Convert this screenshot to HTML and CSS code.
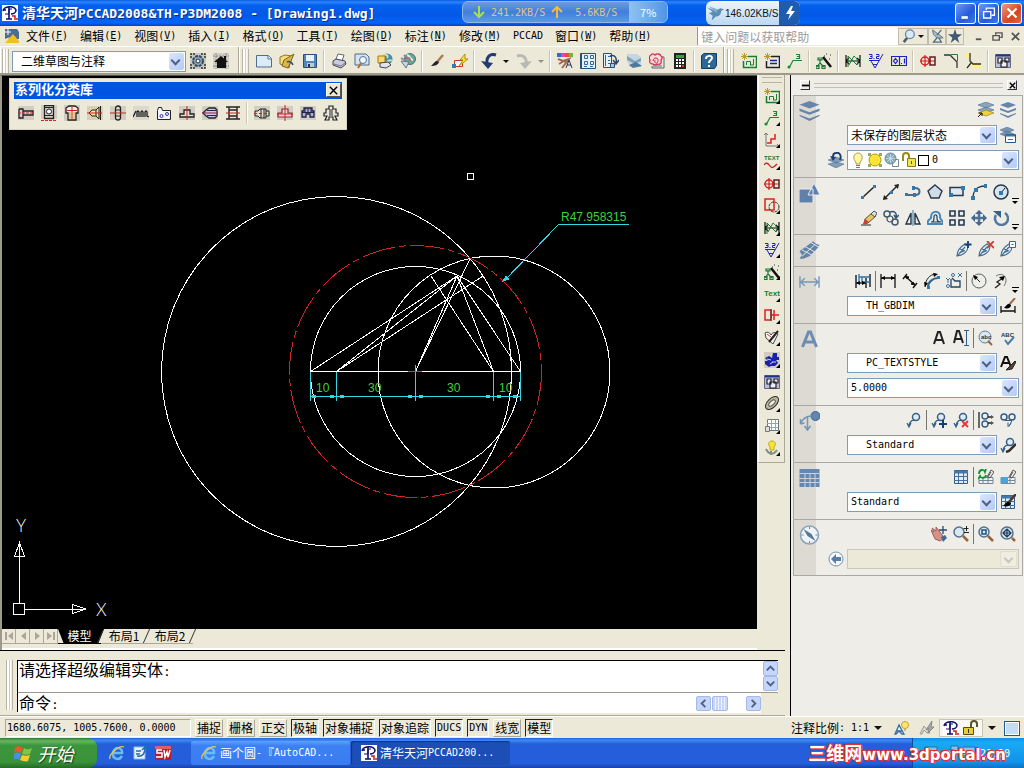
FILE: index.html
```html
<!DOCTYPE html>
<html lang="zh-CN">
<head>
    <meta charset="UTF-8">
    <meta name="viewport" content="width=device-width, initial-scale=1.0">
    <title>清华天河PCCAD2008&amp;TH-P3DM2008 - [Drawing1.dwg]</title>
    <link rel="stylesheet" href="styles.css">
</head>
<body>
    <!-- Icon sprite -->
    <svg class="sprite" aria-hidden="true">
        <symbol id="app" viewBox="0 0 16 16"><path fill="#fff" d="M0 0h16v16H0z"/><path d="M1 6c1-5 11-6 13-1 0 3-3 4-5 4M1 5h3M7 2v12M4 14h6" fill="none" stroke="#101070" stroke-width="1.6"/><path d="M3 9h4V4h3" fill="none" stroke="#101070"/><path d="M10 11h3v2M12 14h4" fill="none" stroke="#d02020" stroke-width="1.6"/></symbol>
        <symbol id="dwg" viewBox="0 0 16 16"><path fill="#4b6d94" d="M1 1h12l2 3v7H1z"/><path fill="#f0c020" d="M1 15 9 6l6 7v2z"/><path fill="#ffe680" d="m1 11 5-2-5 6z"/><path stroke="#fff" d="M4 1v6M1 4h6"/></symbol>
        <symbol id="gear" viewBox="0 0 16 16"><path d="M0 0h16v16H0z" fill="#c6c8c2"/><path d="M1 5V1h4M11 1h4v4M15 11v4h-4M5 15H1v-4" fill="none" stroke="#333" stroke-width="1.500" stroke-dasharray="2 1"/><circle cx="8" cy="8" r="5" fill="#90a5b5" stroke="#334b60" stroke-width="2" stroke-dasharray="3 1"/><circle cx="8" cy="8" r="2" fill="#f4f4ee" stroke="#234"/></symbol>
        <symbol id="home" viewBox="0 0 16 16"><path d="M0 0h16v16H0z" fill="#d2d0c6"/><path d="M0 3h16M3 0v16M13 0v16M0 13h16" fill="none" stroke="#888" stroke-dasharray="2 1"/><path d="m1 9 7-6 7 6h-2v6H4V9z" fill="#111"/><path fill="#111" d="M11 3h2v4h-2z"/></symbol>
        <symbol id="new" viewBox="0 0 16 16"><path d="M.5 2.500h12l3 3v8.500H.5z" fill="#dcebf8" stroke="#4f6f91"/><path d="M12 2v4h3" fill="#fff" stroke="#4f6f91"/></symbol>
        <symbol id="open" viewBox="0 0 16 16"><path d="M1 4 6 2l7 1-3 12-9-4z" fill="#f6dd7a" stroke="#94752c"/><path d="m5 7 10-6-6 14-6-2z" fill="#d9b646" stroke="#7e6428"/><path d="M8 9c2-1 5 0 6 3" fill="none" stroke="#384d66" stroke-width="1.500"/></symbol>
        <symbol id="save" viewBox="0 0 16 16"><path d="M1.500 1.500h13v13h-13z" fill="#5685bd" stroke="#2d4e7b"/><path fill="#e8f2fb" d="M4 2h8v6H4z"/><path fill="#b9c7d6" d="M5 10h7v4H5z"/><path fill="#234" d="M6 11h2v3H6z"/></symbol>
        <symbol id="print" viewBox="0 0 16 16"><path d="m5 6 2-5 6 1-2 6z" fill="#fff" stroke="#667"/><path d="m2 8 3-2 9 2 1 3-5 4-8-3z" fill="#c9cbe0" stroke="#445"/><path d="m3 11 7 2 4-3" fill="none" stroke="#778"/></symbol>
        <symbol id="preview" viewBox="0 0 16 16"><path d="M1 1h11l3 3v8H1z" fill="#d5e5f3" stroke="#50698a"/><circle cx="9" cy="7" r="3.500" fill="#eef8ff" stroke="#54708f"/><path d="m7 10-3 5" stroke="#a57236" stroke-width="2"/></symbol>
        <symbol id="publish" viewBox="0 0 16 16"><circle cx="10" cy="6" r="5.500" fill="#4b87a7"/><path d="M6 3c3-3 6 0 4 2M10 9c2-3 4-1 5-2" stroke="#bfe2bf" stroke-width="2" fill="none"/><path d="M1 3h7v7H1z" fill="#ffd967" stroke="#a67815"/><path d="m3 10 8-1 3 3-5 3-6-1z" fill="#e3e3ec" stroke="#445"/></symbol>
        <symbol id="globe" viewBox="0 0 16 16"><circle cx="10" cy="6" r="5.500" fill="#6ba494" stroke="#4a7187"/><path d="M7 2c4 1 2 4 6 5" stroke="#d5f2e4" stroke-width="2" fill="none"/><path d="m1 5 5 3M4 2l3 3" stroke="#889" stroke-width="2"/><path d="m1 8 8 1-3 6z" fill="#c3d9e9" stroke="#678"/><path d="M5 5h5v3" stroke="#cc4f49" fill="none"/></symbol>
        <symbol id="brush" viewBox="0 0 16 16"><path d="m14 2-6 7" stroke="#a87d52" stroke-width="2.500"/><path d="M8 8c-2 0-3 2-6 5 4 0 7-1 8-4z" fill="#252525"/></symbol>
        <symbol id="block" viewBox="0 0 16 16"><path d="M2.500 7.500h8v6h-8z" fill="#f7f6f0" stroke="#c03a24"/><path d="M0 11h4v4H0z" fill="#3b78b4"/><path d="m8 7 5-6v5h3l-9 7 4-6z" fill="#ffe03b" stroke="#9e7e00" stroke-width=".8"/></symbol>
        <symbol id="undo" viewBox="0 0 16 16"><path d="M15 2C9 0 5 4 6 11" stroke="#233b6e" stroke-width="3" fill="none"/><path d="m0 8 12 2-5 6z" fill="#233b6e"/></symbol>
        <symbol id="redo" viewBox="0 0 16 16"><path d="M1 3c6-2 10 2 9 7" stroke="#b8b8b5" stroke-width="3" fill="none"/><path d="m4 10 12-2-7 8z" fill="#b8b8b5"/></symbol>
        <symbol id="props" viewBox="0 0 16 16"><path fill="#2a6bd0" d="M0 0h4v4H0z"/><path fill="#e34a9b" d="M4 0h4v4H4z"/><path fill="#ea4c36" d="M8 0h4v4H8z"/><path fill="#69b93e" d="M12 0h4v4h-4z"/><path d="m1 6 5 2 6-2-7 9M2 11l5-3 3 2" stroke="#a06b52" stroke-width="2" fill="none"/><path d="m9 15 3-8 3 8m-5-3h4" fill="none" stroke="#335"/></symbol>
        <symbol id="dcenter" viewBox="0 0 16 16"><path fill="#e7f0f8" stroke="#294f79" d="M.5.500h15v15H.5z"/><path stroke="#294f79" stroke-width="2" d="M1 1v14"/><path fill="none" stroke="#2f6b9a" d="M4.500 2.500h3v3h-3zm6 0h3v3h-3zM4.500 8.500h3v3h-3zm6 0h3v3h-3zM4 13.500h3m3 0h3"/></symbol>
        <symbol id="palettes" viewBox="0 0 16 16"><path fill="#e7f0f8" stroke="#294f79" d="M.5.500h8v14h-8z"/><path d="M2.500 2v11M5 3.500h3M5 7.500h2M5 10.500h3" stroke="#2f6b9a"/><path d="M7 3c5-2 7 2 6 7M10 7l3 4 3-4" fill="none" stroke="#2c4568" stroke-width="1.500"/><path fill="#a8c5dd" stroke="#294f79" d="M7.500 10.500h4v4h-4z"/></symbol>
        <symbol id="sheetset" viewBox="0 0 16 16"><path fill="#c4d6e4" d="M1 1h10l4 3v10H4L1 8z"/><path fill="#7fa1b8" d="m1 3 8 5 6-3v3l-6 3-8-4z"/><path fill="#4e7898" d="m3 12 7-3 6 4-9 2z"/></symbol>
        <symbol id="markup" viewBox="0 0 16 16"><path d="M13 4h2v11H3v-2M13 13H4" fill="none" stroke="#567"/><path d="M2 2c1-2 3-1 4 0 2-2 5-1 6 1 2 1 1 3 0 4 1 3-1 5-3 4-2 1-4 1-5 0-3 0-4-2-3-4-1-2-1-4 1-5z" fill="#f7dadd" stroke="#d5304d" stroke-width="1.300"/><path d="M4 8c0-4 6-4 5 0s-4 2-3-1" stroke="#cc263f" fill="none"/></symbol>
        <symbol id="calc" viewBox="0 0 16 16"><path fill="#222" d="M2 0h12v16H2z"/><path fill="#3f9b46" d="M4 2h8v3H4z"/><path d="M4 7h2m1 0h2m1 0h2M4 10h2m1 0h2m1 0h2M4 13h2m1 0h2" stroke="#fff" stroke-width="2"/><path d="M10 13h2" stroke="#e33" stroke-width="2"/></symbol>
        <symbol id="help" viewBox="0 0 16 16"><path fill="#2e6797" stroke="#173c63" d="M.5 2.500 3 .500h12.500v12l-2 3H.5z"/><path d="M5 6c0-4 6-4 6-1 0 2-3 2-3 5M8 12v2" stroke="#fff" stroke-width="2" fill="none"/></symbol>
        <symbol id="detail" viewBox="0 0 16 16"><path d="M7 3.500h8.500v11H2.500V8" fill="none" stroke="#1b7c32" stroke-width="1.500"/><path d="M5.500 12V8.500h4V12m3-6v6H9" fill="none" stroke="#1b7c32"/><path d="m1 1 5 5M3.500 0v7M0 3.500h7M1 6l5-5" stroke="#b8992a"/></symbol>
        <symbol id="title" viewBox="0 0 16 16"><path d="M7 3.500h8.500v11H2.500V8" fill="none" stroke="#222" stroke-width="1.500"/><path d="M6 7.500h7M6 10.500h7" stroke="#1a278a" stroke-width="1.500"/><path d="m1 1 5 5M3.500 0v7M0 3.500h7M1 6l5-5" stroke="#b8992a"/></symbol>
        <symbol id="leader" viewBox="0 0 16 16"><path d="m2 15 4-7.500h9M9 1.500h3.500v4H9m1-2h2" fill="none" stroke="#168837" stroke-width="1.200"/><circle cx="2" cy="14" r="1.500" fill="#168837"/></symbol>
        <symbol id="wand" viewBox="0 0 16 16"><path d="m7 4 8 10" stroke="#111" stroke-width="2.500"/><path d="M4 6v4m-3 4 3-4 4 4M2 5h4v2H2zM0 12.500h3v3H0zm6 0h3v3H6z" fill="none" stroke="#187534" stroke-width="1.200"/><path d="M10 1h1m3 1h1M8 3h1m4 3h1" stroke="#333"/></symbol>
        <symbol id="roughness" viewBox="0 0 16 16"><path d="M1 2v12M15 2v12M1 8h14M4 5 1 8l3 3m8-6 3 3-3 3" stroke="#111" fill="none" stroke-width="1.200"/><path d="M3 14V3l9 9c2-3 0-7-3-9L4 12" fill="none" stroke="#237737"/></symbol>
        <symbol id="surface" viewBox="0 0 16 16"><path d="M1 7.500h10M3 8l4 7 8-14M5 11.500h4M1 1.500h3v4H1m1-2h2M6 5v1M8 1.500h3v2H8.500v2H11" fill="none" stroke="#2323be"/></symbol>
        <symbol id="tol" viewBox="0 0 16 16"><path d="M.5 3.500h15v9H.5zM8.500 4v9M4.500 5.500l2 2.500-2 2.500-2-2.500zM10 10.500h1m2.500-5v5" fill="none" stroke="#2020ba" stroke-width="1.200"/></symbol>
        <symbol id="shaft" viewBox="0 0 16 16"><circle cx="5" cy="8" r="4" fill="none" stroke="#d42020" stroke-width="1.500"/><path d="M0 8h15M5 2v12" stroke="#d42020" stroke-width="1.200"/><path d="M10 4h5v8h-5z" fill="none" stroke="#5b2020" stroke-width="1.500"/></symbol>
        <symbol id="chamfer" viewBox="0 0 16 16"><path d="M1 2h6l7 7v6" fill="none" stroke="#333" stroke-width="1.300"/><path d="M8 1.500h6.500V8" fill="none" stroke="#257b34"/></symbol>
        <symbol id="corner" viewBox="0 0 16 16"><path fill="#fff08a" d="M5 10h11v5H7zM0 0h4v5H0z"/><path d="M4 0v8l3 3h8M1 15l4-5" fill="none" stroke="#332" stroke-width="1.300"/></symbol>
        <symbol id="windows" viewBox="0 0 16 16"><path fill="#b9bfd8" stroke="#668" d="M.5 1.500h15v13H.5z"/><path stroke="#238" stroke-width="2" d="M1 2.500h14"/><path fill="#eef" stroke="#222" stroke-width="1.200" d="M3 5h4v5H3zm3 3h6v6H6zm4-3h4v4h-4z"/></symbol>
        <symbol id="bolt" viewBox="0 0 16 16"><path d="M0 1h16v14H0z" fill="#d2cdc2"/><path d="M1 4h4v9H1V4m4 2h10v4H5" fill="none" stroke="#222" stroke-width="1.300"/><path d="M0 8h16" stroke="#c8243c" stroke-dasharray="3 1"/></symbol>
        <symbol id="bearing" viewBox="0 0 16 16"><path d="M0 0h16v14H0z" fill="#d2cdc2"/><path d="M3.500.500h9v13h-9z" fill="none" stroke="#222" stroke-width="1.300"/><path d="M3 2.500h10M3 10.500h10" stroke="#222"/><circle cx="8" cy="6.500" r="2.500" fill="#fff" stroke="#222"/><path d="M0 15.500h16" stroke="#d22" stroke-dasharray="3 1"/></symbol>
        <symbol id="nut" viewBox="0 0 16 16"><path d="M0 0h16v16H0z" fill="#d2cdc2"/><path d="m2 3 3-2h6l3 2v5h-2v7H4V8H2z" fill="#f7eadf" stroke="#222" stroke-width="1.300"/><path d="M8 0v15M3 5.500h10" stroke="#c22"/><path d="M6 7v7m4-7v7" stroke="#c9a82c"/></symbol>
        <symbol id="rivet" viewBox="0 0 16 16"><path d="M0 1h16v14H0z" fill="#d8cfb4"/><path d="m2 8 3-3h4l3-3v12l-3-3H5z" fill="#f4e2a0" stroke="#222"/><path d="M13.500 1v14M9 5v6" stroke="#222"/><path d="M0 8h15" stroke="#c22"/></symbol>
        <symbol id="key" viewBox="0 0 16 16"><path d="M0 1h16v14H0z" fill="#d2cdc2"/><rect x="5.500" y="1" width="5" height="14" rx="2.500" fill="#e2dcc4" stroke="#222" stroke-width="1.300"/><path d="M5 5h6M5 11h6" stroke="#222"/><path d="M0 8h16" stroke="#c22"/></symbol>
        <symbol id="spring" viewBox="0 0 16 16"><path d="M0 1h16v14H0z" fill="#ddd8cc"/><path d="m0 12 3-6M4 12V7l1-1 1 1v5M8 12V7l1-1 1 1v5M12 12V7l1-1 1 1v4l2 1" fill="none" stroke="#222" stroke-width="1.300"/></symbol>
        <symbol id="plate" viewBox="0 0 16 16"><path d="M1.500 14.500v-9l1-3h3l1 3h8v9z" fill="#f5f4ff" stroke="#222"/><circle cx="5.500" cy="11" r="1.500" fill="none" stroke="#33a"/><circle cx="11" cy="9" r="1.500" fill="none" stroke="#33a"/></symbol>
        <symbol id="flange" viewBox="0 0 16 16"><path d="M0 1h16v14H0z" fill="#d2cdc2"/><path d="M5 5h6v4h4v3H1V9h4z" fill="#e6e0d5" stroke="#222" stroke-width="1.300"/><path d="M8 1v14" stroke="#c22"/></symbol>
        <symbol id="motor" viewBox="0 0 16 16"><path d="M0 1h16v14H0z" fill="#d2cdc2"/><path d="m1 8 3-3 3-2h6l2 2v6l-2 2H7l-3-2z" fill="#cdc8e6" stroke="#222" stroke-width="1.300"/><path d="M5 5.500h9M5 10.500h9" stroke="#225"/><path d="M0 8h16" stroke="#8c2445"/></symbol>
        <symbol id="beam" viewBox="0 0 16 16"><path d="M1 2h14M1 14h14M4 2v12m8-12v12M4 5h8m-8 6h8" fill="none" stroke="#222" stroke-width="1.400"/><path d="M1 8h14" stroke="#c22"/></symbol>
        <symbol id="reducer" viewBox="0 0 16 16"><path d="M0 1h16v14H0z" fill="#d2cdc2"/><path d="M1 6h3l2-2h6v9H6l-2-2H1zm6-2v9m3-9v9m2-7h3v5h-3" fill="#e5dfd3" stroke="#222"/><path d="M0 8.500h16" stroke="#c22" stroke-dasharray="3 2"/></symbol>
        <symbol id="valve" viewBox="0 0 16 16"><path d="M0 1h16v14H0z" fill="#d2cdc2"/><path d="M5 4h6v4h4v4H1V8h4z" fill="#f4d6d6" stroke="#8b2338" stroke-width="1.200"/><path d="M8 0v16M0 9h16" stroke="#c22"/></symbol>
        <symbol id="pump" viewBox="0 0 16 16"><path d="M0 1h16v14H0z" fill="#d2cdc2"/><path d="M4 3h8v3h2v6h-4V9H6v3H2V6h2z" fill="#aab0dc" stroke="#224" stroke-width="1.300"/><path d="M5 3v5m3-5v6m3-6v5M2 7.500h12" stroke="#224"/></symbol>
        <symbol id="fitting" viewBox="0 0 16 16"><path d="M6 1h4v3h3v4h2v3h-3l2 4h-4v-3H6v3H2l2-4H1V8h2V4h3z" fill="#eae8dc" stroke="#222" stroke-width="1.200"/><path d="M7 4v7m2-7v7" stroke="#222"/></symbol>
        <symbol id="axis" viewBox="0 0 16 16"><path d="M2 1v13h13M0 3l2-2 2 2m9 9 2 2-2 2" fill="none" stroke="#777"/><path d="M3 11h4V7h4V2" fill="none" stroke="#d22" stroke-width="1.500"/></symbol>
        <symbol id="textwave" viewBox="0 0 16 16"><path d="M0 11c2-3 4-2 6 1s4 1 7-2" fill="none" stroke="#c22" stroke-width="1.300"/><text x="0" y="6" class="t7">TEXT</text></symbol>
        <symbol id="redbox" viewBox="0 0 16 16"><path d="M1 1h9v11H1z" fill="none" stroke="#d22" stroke-width="1.500"/><circle cx="10" cy="9" r="5" fill="none" stroke="#333" stroke-dasharray="3 1"/></symbol>
        <symbol id="textgreen" viewBox="0 0 16 16"><text x="0" y="10" class="t8">Text</text></symbol>
        <symbol id="redrect" viewBox="0 0 16 16"><path d="M1 2h6v10H1zm6 5h8M10 2v10" fill="none" stroke="#d22" stroke-width="1.500"/><path d="M7 1v12" stroke="#333"/></symbol>
        <symbol id="tag" viewBox="0 0 16 16"><path d="M1 3c3-2 5 0 6 2 2-4 6-2 7-1L9 14 2 8z" fill="#f5f5ed" stroke="#444"/><path d="m5 12 9-11" stroke="#222" stroke-width="2"/><path d="m3 4 4 3" stroke="#c44"/></symbol>
        <symbol id="blueblob" viewBox="0 0 16 16"><path d="M0 0h16v16H0z" fill="#d0cdc0"/><path d="M9 1h4v4h2v3h-3l2 3-3 3H7l-2 1-4-3V9h3L1 6l4-2 3 2z" fill="#1821a8"/><path d="m3 7 4 1m1 2h4M6 12l3-2" stroke="#cfd3f2"/></symbol>
        <symbol id="ring" viewBox="0 0 16 16"><ellipse cx="8" cy="7" rx="8" ry="4.500" transform="rotate(-45 8 7)" fill="#b7b79a" stroke="#333"/><ellipse cx="8" cy="7" rx="4" ry="2" transform="rotate(-45 8 7)" fill="#eeeedc" stroke="#555"/></symbol>
        <symbol id="sheet" viewBox="0 0 16 16"><path d="M3.500 1.500h11v11h-11z" fill="#fff" stroke="#697b7b"/><path d="M3 5.500h11M3 9.500h11M7.500 2v10m4-10v10" stroke="#8baaaa"/><path fill="#ddd" d="M1.500 8.500h4v5h-4z" stroke="#777"/></symbol>
        <symbol id="idea" viewBox="0 0 16 16"><path d="M8 1c4 0 4 4 2 6v3H6V7C4 5 4 1 8 1z" fill="#f4e433" stroke="#c0a820"/><path d="M2 9c3 6 8 6 11 1M7 11v4" fill="none" stroke="#838e85" stroke-width="2"/></symbol>
        <symbol id="layers" viewBox="0 0 16 16"><path d="m8 0 8 3-8 3-8-3zM0 6l8 3 8-3v2l-8 3-8-3zm0 5 8 3 8-3v1l-8 4-8-4z" fill="#6685aa"/></symbol>
        <symbol id="layeriso" viewBox="0 0 16 16"><path d="m8 0 8 3-8 3-8-3zm0 5 8 3-8 3-8-3z" fill="#8aa5bf" stroke="#536d87" stroke-width=".6"/><path d="m8 8 8 3-8 3-8-3z" fill="#f1d238" stroke="#8d7920" stroke-width=".6"/><path d="m0 15 4-4m-3 0h3v3" fill="none" stroke="#111"/></symbol>
        <symbol id="layerstate" viewBox="0 0 16 16"><path d="m7 0 7 3-7 3-7-3zm0 4 7 3-7 3-7-3z" fill="#7894b0" stroke="#49688d" stroke-width=".5"/><path d="M5.500 7.500h10v8h-10z" fill="#fff" stroke="#295783"/><path d="M5 8.500h10" stroke="#3974b1" stroke-width="2"/><path d="M8 12.500h5" stroke="#3974b1"/></symbol>
        <symbol id="layerprev" viewBox="0 0 16 16"><path d="m8 5 8 3-8 3-8-3zm0 5 8 2-8 4-8-4z" fill="#809cb6" stroke="#49688d" stroke-width=".5"/><path d="M12 8c2-5-1-8-4-7-2 0-3 2-3 4" stroke="#203f70" stroke-width="2" fill="none"/><path d="m2 4 6 1-3 4z" fill="#203f70"/></symbol>
        <symbol id="bulb" viewBox="0 0 16 16"><path d="M6 10C2 7 4 1 8 1s6 6 2 9v2H6z" fill="#fff7a6" stroke="#b39b3e"/><path d="M6 13.500h4m-4 2h4" stroke="#777"/></symbol>
        <symbol id="sun" viewBox="0 0 16 16"><path d="M1 1h3v3H1zm11 0h3v3h-3zM1 12h3v3H1zm11 0h3v3h-3z" fill="#8fae5a"/><circle cx="8" cy="8" r="6" fill="#ffe533" stroke="#b49318"/></symbol>
        <symbol id="freeze" viewBox="0 0 16 16"><path d="M8.500 7.500h6v7h-6z" fill="#fff" stroke="#789"/><circle cx="6.500" cy="6.500" r="5.500" fill="#88aab7" stroke="#6d8b98"/><path d="M2 6.500h9M6.500 2v9M3 3l7 7m0-7-7 7" stroke="#d5e5ec" stroke-width=".7"/></symbol>
        <symbol id="unlock" viewBox="0 0 16 16"><path d="M2 9V4c0-4 6-4 6 0v4" fill="none" stroke="#998a13" stroke-width="2"/><path d="M6.500 6.500h8v8h-8z" fill="#f0e64a" stroke="#8b7c0d"/><path d="M10.500 9v3" stroke="#554"/></symbol>
        <symbol id="shapes" viewBox="0 0 21 20"><path d="M0 6h14v14H0zM15 0l6 12H9z" fill="#5e80aa" stroke="#e9edf0"/></symbol>
        <symbol id="line" viewBox="0 0 16 16"><path d="M1 14 14 2" stroke="#222" stroke-width="1.500"/><path fill="#3c79aa" d="M0 12h3v3H0zM12 1h3v3h-3z"/></symbol>
        <symbol id="xline" viewBox="0 0 16 16"><path d="M1 15 15 1" stroke="#222" stroke-width="1.500"/><path d="m0 16 1-5 4 4zM16 0l-1 5-4-4z" fill="#222"/><path fill="#3c79aa" d="M7 7h3v3H7z"/></symbol>
        <symbol id="pline" viewBox="0 0 16 16"><path d="M2 11h8c6 0 6-7 0-7H8" fill="none" stroke="#496b87" stroke-width="2"/><path fill="#3479ac" d="M0 9h3v3H0zm8 0h3v4H8zM7 2h3v4H7z"/></symbol>
        <symbol id="polygon" viewBox="0 0 16 16"><path d="m8 1 7 6-3 7H4L1 7z" fill="#cfdde6" stroke="#26394d" stroke-width="1.400"/></symbol>
        <symbol id="rect" viewBox="0 0 16 16"><path d="M1 3.500h13v8H1z" fill="#dde8f0" stroke="#26394d" stroke-width="1.500"/><path fill="#3479ac" d="M0 9h4v4H0zm12-7h4v4h-4z"/></symbol>
        <symbol id="arc" viewBox="0 0 16 16"><path d="M2 14C2 7 6 2 14 2" fill="none" stroke="#26394d" stroke-width="1.400"/><path fill="#3479ac" d="M0 12h4v4H0zm3-8h4v4H3zm10-4h3v4h-3z"/></symbol>
        <symbol id="circle" viewBox="0 0 16 16"><circle cx="8" cy="8" r="7" fill="#d6e5f0" stroke="#26394d" stroke-width="1.500"/><path d="m8 9 4-5" stroke="#222"/><path fill="#3479ac" d="M6 7h4v4H6z"/></symbol>
        <symbol id="erase" viewBox="0 0 16 16"><path d="M0 15h10" stroke="#222"/><path d="m4 9 7-6 4 3-8 7-4 1z" fill="#e8c45d" stroke="#5c5448"/><path d="m4 9 4 3-4 2H2z" fill="#d33a38"/><path d="m10 4 4 3 2-4-3-2z" fill="#d9dee1" stroke="#555"/></symbol>
        <symbol id="copy" viewBox="0 0 16 16"><circle cx="4" cy="4" r="3" fill="none" stroke="#42586b" stroke-width="1.500"/><circle cx="7" cy="9" r="3" fill="none" stroke="#42586b" stroke-width="1.200"/><circle cx="12" cy="12" r="3" fill="none" stroke="#42586b" stroke-width="1.500"/><path d="M7 2c5-2 7 2 6 5m-2-2 2 3 3-3" fill="none" stroke="#345578" stroke-width="1.500"/></symbol>
        <symbol id="mirror" viewBox="0 0 16 16"><path d="M6 3v11H1zm4 0v11h5z" fill="none" stroke="#243547" stroke-width="1.400"/><path d="M8 0v16" stroke="#3773a2"/></symbol>
        <symbol id="offset" viewBox="0 0 16 16"><path d="M1 14c-2-5 4-4 3-7 0-7 10-7 9 0 0 3 3 3 3 7z" fill="#e6edef" stroke="#4b86b4" stroke-width="2"/><path d="M4 12c3 0 3-2 3-5s3-3 3 0 0 5 4 5z" fill="none" stroke="#203c53" stroke-width="1.200"/></symbol>
        <symbol id="array" viewBox="0 0 16 16"><path d="M1 1h5v5H1zm9 0h5v5h-5zM1 10h5v5H1zm9 0h5v5h-5z" fill="#e9edf1" stroke="#26394d" stroke-width="1.600"/></symbol>
        <symbol id="move" viewBox="0 0 16 16"><path d="M8 2v12M2 8h12" stroke="#4d7297" stroke-width="2.500"/><path d="m8 0 4 4H4zM8 16l4-4H4zM0 8l4-4v8zm16 0-4-4v8z" fill="#45698d"/></symbol>
        <symbol id="rotate" viewBox="0 0 16 16"><path d="M3 5a6.500 6.500 0 1 0 9-2" fill="none" stroke="#5379a0" stroke-width="2.500"/><path d="M0 1h8v7z" fill="#36618b"/></symbol>
        <symbol id="feather" viewBox="0 0 16 16"><path d="m0 9 11-8 2 2 3 1-2 3-6 6-5 2H0l2-3z" fill="#6284a7"/><path d="m4 5 9 5M2 8l8 4M9 2l7 4M2 13l10-9" stroke="#e1e5e7" stroke-width=".8"/></symbol>
        <symbol id="plot" viewBox="0 0 16 16"><path d="M1 15c0-4 3-9 8-12l3 2c0 5-4 9-11 10zm0 0c4-4 5-6 8-9M4 8l5 2M3 12l5-2" fill="#e6edf2" stroke="#466c93" stroke-width="1.200"/></symbol>
        <symbol id="plotadd" viewBox="0 0 16 16"><use href="#plot"/><path d="M12 0v7M8.500 3.500h7" stroke="#173f72" stroke-width="1.800"/></symbol>
        <symbol id="plotdel" viewBox="0 0 16 16"><use href="#plot"/><path d="m9 0 7 7m0-7L9 7" stroke="#e13737" stroke-width="1.800"/></symbol>
        <symbol id="plotpage" viewBox="0 0 16 16"><use href="#plot"/><path d="M9.500.500h6v6h-6zm2 3h2" fill="#fff" stroke="#3a6997"/></symbol>
        <symbol id="dimbig" viewBox="0 0 22 16"><path d="M1 2v12M21 2v12M2 8h18M6 4 2 8l4 4m10-8 4 4-4 4" fill="none" stroke="#7698bb" stroke-width="1.500"/></symbol>
        <symbol id="dimquick" viewBox="0 0 16 16"><path d="M1 2v13M11 5v10M15 1v13M1 10h10" stroke="#1e2a34" stroke-width="1.500"/><path d="M4 1v9M4 4h11M7 4v5h8" fill="none" stroke="#2e71a4" stroke-width="1.300"/><path d="m1 10 4-2v4zm10 0-4-2v4z"/></symbol>
        <symbol id="dimlin" viewBox="0 0 16 16"><path d="M1 1v14M15 1v14M1 5h14" stroke="#111" stroke-width="1.300"/><path d="m1 5 4-2v4zm14 0-4-2v4z"/></symbol>
        <symbol id="dimali" viewBox="0 0 16 16"><path d="m3 3 10 9M1 6l4-5m6 14 4-5" stroke="#111" stroke-width="1.400"/><path d="m3 3 4 1-2 2zm10 9-4-1 2-2z" stroke="#111"/></symbol>
        <symbol id="dimarc" viewBox="0 0 16 16"><path d="M4 14C4 9 9 5 14 5" fill="none" stroke="#2c6694" stroke-width="2"/><path d="M1 14C1 7 6 1 12 1" fill="none" stroke="#222"/><path d="m1 14 3-4-4-1zM14 1l-5-1 1 4z"/><path fill="#3479ac" d="M3 13h3v3H3zm10-10h3v3h-3z"/></symbol>
        <symbol id="dimord" viewBox="0 0 16 16"><path d="M5 6v8h9V8H9L6 5" fill="none" stroke="#24415d" stroke-width="1.300"/><path d="m0 5 2 2 2-2M2 7v3M12 0l4 4m0-4-4 4" fill="none" stroke="#3973a0"/><circle cx="7" cy="2" r="1.500" fill="none" stroke="#3973a0"/><circle cx="2" cy="13" r="1.500" fill="none" stroke="#3973a0"/></symbol>
        <symbol id="dimrad" viewBox="0 0 16 16"><circle cx="8" cy="8" r="7" fill="none" stroke="#55616b"/><path d="m9 9-5-5" stroke="#222"/><path d="m2 2 5 2-3 3z"/></symbol>
        <symbol id="dimjog" viewBox="0 0 16 16"><path d="M3 3c8-5 13 3 8 10" fill="none" stroke="#65717a"/><path d="m2 15 5-4-3-2 6-4" fill="none" stroke="#222" stroke-width="1.300"/><path d="m12 3-6 1 4 4z"/></symbol>
        <symbol id="dimstyle" viewBox="0 0 16 16"><path d="M1 8v7m14-7v7M1 13h14" stroke="#111" stroke-width="1.300"/><path d="m15 0-7 8" stroke="#9b694c" stroke-width="2"/><path d="M9 6c-2 0-3 2-5 4 4 1 7 0 7-3z"/></symbol>
        <symbol id="txt" viewBox="0 0 16 16"><path d="m3 14 4-12h2l4 12m-8-4h6" fill="none" stroke="#222" stroke-width="2"/></symbol>
        <symbol id="mtxt" viewBox="0 0 16 16"><path d="M1 13 4 1h2l4 12M2 9h6" fill="none" stroke="#222" stroke-width="2"/><path d="M11 .5h5m-5 15h5M13.500 1v14" stroke="#315f8a"/></symbol>
        <symbol id="find" viewBox="0 0 16 16"><circle cx="7" cy="7" r="6" fill="#d8e7f0" stroke="#647f93"/><path d="m10 11 4 4" stroke="#9a633b" stroke-width="2"/><text x="3" y="9" class="abc">abc</text></symbol>
        <symbol id="spell" viewBox="0 0 16 16"><text x="1" y="7" class="abc">ABC</text><path d="m5 10 3 4 6-7" fill="none" stroke="#467ba8" stroke-width="2"/></symbol>
        <symbol id="txtstyle" viewBox="0 0 16 16"><path d="m1 12 4-10h2l4 10M3 8h6" fill="none" stroke="#111" stroke-width="2"/><path d="m15 6-6 6-3 3 6-1 4-7z" fill="#5b4435" stroke="#222"/></symbol>
        <symbol id="leaderbig" viewBox="0 0 20 20"><circle cx="16" cy="5" r="4.500" fill="#6286ae" stroke="#3e648c"/><path d="M12 5C7 5 3 8 1 13m7-7v12m-3-3 3 4 3-4M1 13V8m0 5 4-1" fill="none" stroke="#7495b8" stroke-width="1.500"/></symbol>
        <symbol id="ml" viewBox="0 0 16 16"><circle cx="10" cy="5" r="3.500" fill="#dfebf5" stroke="#355f88" stroke-width="1.500"/><path d="M9 8.500H6C4 10 3 12 3 14m-2-3 2 4 2-4" fill="none" stroke="#355f88" stroke-width="1.200"/></symbol>
        <symbol id="mladd" viewBox="0 0 16 16"><use href="#ml"/><path d="M12 8v8M8 12h8" stroke="#173f72" stroke-width="2"/></symbol>
        <symbol id="mldel" viewBox="0 0 16 16"><use href="#ml"/><path d="m9 9 6 6m0-6-6 6" stroke="#e13737" stroke-width="1.800"/></symbol>
        <symbol id="mlalign" viewBox="0 0 16 16"><circle cx="7" cy="4" r="3" fill="none" stroke="#355f88" stroke-width="1.400"/><circle cx="7" cy="12" r="3" fill="none" stroke="#355f88" stroke-width="1.400"/><path d="M1 0v16M10 5h4m-4 6h4" stroke="#222" stroke-width="1.300"/><path d="m13 3 3 2-3 2m0 2 3 2-3 2" fill="#555"/></symbol>
        <symbol id="mlgroup" viewBox="0 0 16 16"><circle cx="4" cy="5" r="3" fill="none" stroke="#355f88" stroke-width="1.500"/><circle cx="12" cy="5" r="3" fill="none" stroke="#355f88" stroke-width="1.500"/><path d="M5 8.500h7l-3 6m-1-4v4l3-3" fill="none" stroke="#355f88"/></symbol>
        <symbol id="mlstyle" viewBox="0 0 16 16"><use href="#ml"/><path d="m16 7-7 7-3 1" stroke="#382d27" stroke-width="2.500"/></symbol>
        <symbol id="table" viewBox="0 0 16 16"><path d="M1.500 1.500h13v13h-13z" fill="#e0edf5" stroke="#315b87"/><path d="M1 3h14" stroke="#447ab0" stroke-width="3"/><path d="M1 7.500h14M1 11.500h14M5.500 2v12m5-12v12" stroke="#466f99"/></symbol>
        <symbol id="tabbig" viewBox="0 0 20 20"><path d="M0 1h20v18H0z" fill="#6787ae"/><path d="M0 5.500h20M0 10.500h20M0 14.500h20M5.500 5v14m5-14v14m5-14v14" stroke="#c5d3e1"/></symbol>
        <symbol id="tablink" viewBox="0 0 16 16"><path d="M1 8.500h14v6H1zm4 0v6m5-6v6M1 11.500h14" fill="#eef3f6" stroke="#768694"/><path d="M1 5c0-5 5-5 6-2l1-3m0 6c0 3-5 4-6 1l-2 3" fill="none" stroke="#16932e" stroke-width="1.800"/><path d="m9 8 4-7 3 2-4 6-2-1 3-5" fill="none" stroke="#555"/></symbol>
        <symbol id="tabex" viewBox="0 0 16 16"><path d="M1 8.500h14v6H1zm4 0v6m5-6v6M1 11.500h14" fill="#eef3f6" stroke="#768694"/><path fill="#49a4dc" d="M1 8h7v6H1z"/><path d="m9 8 4-7 3 2-4 6-2-1 3-5" fill="none" stroke="#555"/></symbol>
        <symbol id="tabstyle" viewBox="0 0 16 16"><use href="#table"/><path d="m16 0-8 9" stroke="#4b392e" stroke-width="2.500"/><path d="M8 8c-3 0-3 3-5 4 5 1 7 0 8-3z"/></symbol>
        <symbol id="compass" viewBox="0 0 20 20"><circle cx="10" cy="10" r="9" fill="#eff3f5" stroke="#8ba3ba" stroke-width="1.500"/><path d="m4 4 8 5 4 7-8-5z" fill="#58789a"/><path d="M10 2v2m0 12v2M2 10h2m12 0h2" stroke="#66839f"/></symbol>
        <symbol id="pan" viewBox="0 0 16 16"><path d="m0 4 3 2-2-4 4 3V1l4 5 2 3 2 3-4 3-5-2z" fill="#d69286" stroke="#a25d56"/><path d="m10 11 4-2 2 3-4 4z" fill="#446a91"/><path d="M12 0v8M8 4h8" stroke="#254a70" stroke-width="1.300"/></symbol>
        <symbol id="lens" viewBox="0 0 16 16"><circle cx="6" cy="6" r="5" fill="#d9e9f2" stroke="#54718b" stroke-width="1.500"/><path d="m10 10 5 5" stroke="#9a633b" stroke-width="2.500"/></symbol>
        <symbol id="zoomrt" viewBox="0 0 16 16"><use href="#lens"/><path d="M13.500 0v5m-3-2.500h5M11 6.500h5" stroke="#222"/></symbol>
        <symbol id="zoomwin" viewBox="0 0 16 16"><use href="#lens"/><path d="M4 4h4v4H4z" fill="none" stroke="#1e527e" stroke-width="1.500"/></symbol>
        <symbol id="zoomext" viewBox="0 0 16 16"><circle cx="7" cy="7" r="6" fill="#d9e9f2" stroke="#54718b" stroke-width="1.500"/><path d="M7 3v8M3 7h8M5 5l2-2 2 2M5 9l2 2 2-2M5 5 3 7l2 2m4-4 2 2-2 2" fill="none" stroke="#173958" stroke-width="1.200"/><path d="m12 12 3 3" stroke="#9a633b" stroke-width="2.500"/></symbol>
        <symbol id="back" viewBox="0 0 16 16"><circle cx="8" cy="8" r="7" fill="#f5f8fa" stroke="#7893ad"/><path d="m3 8 5-5v3h5v4H8v3z" fill="#557da5"/></symbol>
        <symbol id="search" viewBox="0 0 16 16"><path d="m6 10-4 5" stroke="#4d5b6d" stroke-width="3"/><circle cx="9" cy="6" r="5" fill="#d8e9fa" stroke="#6a85a4" stroke-width="1.500"/></symbol>
        <symbol id="dish" viewBox="0 0 16 16"><path d="M3 1c0 7 5 11 12 9z" fill="#a9bac9" stroke="#566b80"/><path d="M8 7l5-6M8 10l-4 5h9l-3-5" fill="none" stroke="#566b80" stroke-width="1.500"/></symbol>
        <symbol id="star" viewBox="0 0 16 16"><path d="m8 0 2 6h6l-5 4 2 6-5-4-5 4 2-6-5-4h6z" fill="#3f5874"/></symbol>
        <symbol id="ie" viewBox="0 0 16 16"><path d="M13 11c-3 5-10 3-9-3 1-7 10-6 9 0H5" fill="none" stroke="#66bdf5" stroke-width="2.500"/><path d="M1 14c-2-4 9-14 14-12" fill="none" stroke="#f2c645" stroke-width="1.300"/></symbol>
        <symbol id="desktop" viewBox="0 0 16 16"><path d="M2 2h11v12H2z" fill="#e8f3fb" stroke="#8bbbe5"/><path d="M5 11c6 1 8-3 8-8m-3 2 3-3 3 3M4 6h5M4 9h4" fill="none" stroke="#2769b2" stroke-width="1.500"/></symbol>
        <symbol id="sw" viewBox="0 0 16 16"><path d="M0 1h16v14H0z" fill="#b81e2b"/><path fill="#e06060" d="M0 1h16v3H0z"/><path d="M7 5H2v3h5v4H1M9 5l1 7 2-5 1 5 2-7" fill="none" stroke="#fff" stroke-width="1.500"/></symbol>
        <symbol id="flag" viewBox="0 0 18 18"><path d="M1 4c3-3 5-2 8 0L7 9C5 7 3 7 0 9z" fill="#e65a2a"/><path d="M10 4c3 2 5 1 8 0l-2 6c-3 1-5 1-8 0z" fill="#82c341"/><path d="M0 10c2-2 4-2 7 0l-2 6c-2-2-4-1-6 0z" fill="#4b8fea"/><path d="M8 11c3 1 5 1 8 0l-2 6c-3 1-5 0-8-1z" fill="#f9c931"/></symbol>
        <symbol id="annovis" viewBox="0 0 16 16"><path d="m1 14 4-9 5 9H8l-3-3-3 3zm2-3h5" fill="#e3f0fa" stroke="#386ea0" stroke-width="1.300"/><circle cx="11" cy="5" r="3.500" fill="#ffe56b" stroke="#c7a434"/><path d="M10 10h2" stroke="#887"/></symbol>
        <symbol id="annoauto" viewBox="0 0 16 16"><path d="m1 14 4-8 6 7H8l-3-3-2 4z" fill="#ddd" stroke="#999"/><path d="m7 10 6-9-1 6h3l-6 6 1-5z" fill="#aaa" stroke="#888"/></symbol>
        <symbol id="lock" viewBox="0 0 16 16"><path d="M8 7V4c0-4 6-4 6 0v3" fill="none" stroke="#5b5423" stroke-width="2"/><path d="M.5 7.500h10v7H.5z" fill="#e6cc3d" stroke="#574a10"/><path d="M5.500 9v4" stroke="#332"/></symbol>
    </svg>

    <header class="titlebar">
        <svg class="icon"><use href="#app"/></svg>
        <h1>清华天河<span>PCCAD2008&amp;TH-P3DM2008 - [Drawing1.dwg]</span></h1>
        <div class="netmeter">
            <svg class="icon" viewBox="0 0 16 16"><path d="M8 2v11M3 8l5 5 5-5" fill="none" stroke="#a8e052" stroke-width="2"/></svg>
            <span class="rate">241.2KB/S</span>
            <svg class="icon" viewBox="0 0 16 16"><path d="M8 14V3M3 8l5-5 5 5" fill="none" stroke="#f5b93e" stroke-width="2"/></svg>
            <span class="rate up">5.6KB/S</span>
            <span class="percent">7%</span>
        </div>
        <div class="speedball">
            <svg class="bird" viewBox="0 0 20 18"><path d="m1 3 9 4 5-3 4 1-3 2c0 4-3 6-6 6l-4 4 1-5-4-3 4-1z" fill="#5b8db3"/><path d="m3 2 9 3-1 4z" fill="#7fb0d2"/></svg>
            <span>146.02KB/S</span>
            <button aria-label="加速"><svg class="icon" viewBox="0 0 16 16"><path d="m9 1-5 8h4l-2 6 7-9H9l2-5z" fill="#fff"/></svg></button>
        </div>
        <div class="window-buttons">
            <button aria-label="最小化"><svg viewBox="0 0 20 20"><path d="M5 15h7" stroke="#fff" stroke-width="3"/></svg></button>
            <button aria-label="还原"><svg viewBox="0 0 20 20"><path d="M7 7V4.500h9v8h-3M4 8.500h8v7H4z" fill="none" stroke="#fff" stroke-width="1.500"/></svg></button>
            <button class="close" aria-label="关闭"><svg viewBox="0 0 20 20"><path d="m5 5 10 10M15 5 5 15" stroke="#fff" stroke-width="2.500"/></svg></button>
        </div>
    </header>

    <nav class="menubar">
        <svg class="icon"><use href="#dwg"/></svg>
        <button>文件<span>(<u>F</u>)</span></button>
        <button>编辑<span>(<u>E</u>)</span></button>
        <button>视图<span>(<u>V</u>)</span></button>
        <button>插入<span>(<u>I</u>)</span></button>
        <button>格式<span>(<u>O</u>)</span></button>
        <button>工具<span>(<u>T</u>)</span></button>
        <button>绘图<span>(<u>D</u>)</span></button>
        <button>标注<span>(<u>N</u>)</span></button>
        <button>修改<span>(<u>M</u>)</span></button>
        <button><span>PCCAD</span></button>
        <button>窗口<span>(<u>W</u>)</span></button>
        <button>帮助<span>(<u>H</u>)</span></button>
        <input class="help-search" type="text" aria-label="帮助搜索" placeholder="键入问题以获取帮助">
        <div class="info-buttons">
            <button class="wide" aria-label="搜索"><svg class="icon"><use href="#search"/></svg><i class="down"></i></button>
            <button aria-label="通讯中心"><svg class="icon"><use href="#dish"/></svg></button>
            <button aria-label="收藏夹"><svg class="icon"><use href="#star"/></svg></button>
        </div>
        <div class="mdi-buttons">
            <button aria-label="最小化文档"><svg viewBox="0 0 12 12"><path d="M2 9h6" stroke="#555" stroke-width="2"/></svg></button>
            <button aria-label="还原文档"><svg viewBox="0 0 12 12"><path d="M4 4V2h7v5H9M1 5h7v5H1z" fill="none" stroke="#555" stroke-width="1.500"/></svg></button>
            <button aria-label="关闭文档"><svg viewBox="0 0 12 12"><path d="m2 2 8 8m0-8-8 8" stroke="#555" stroke-width="2"/></svg></button>
        </div>
    </nav>

    <div class="toolbars">
        <div class="toolbar workspace-bar">
            <i class="grip"></i>
            <span class="combo"><select aria-label="工作空间"><option>二维草图与注释</option></select></span>
            <button aria-label="工作空间设置"><svg class="icon"><use href="#gear"/></svg></button>
            <button aria-label="我的工作空间"><svg class="icon"><use href="#home"/></svg></button>
        </div>
        <div class="toolbar">
            <i class="grip"></i>
            <button aria-label="新建"><svg class="icon"><use href="#new"/></svg></button>
            <button aria-label="打开"><svg class="icon"><use href="#open"/></svg></button>
            <button aria-label="保存"><svg class="icon"><use href="#save"/></svg></button>
            <i class="sep"></i>
            <button aria-label="打印"><svg class="icon"><use href="#print"/></svg></button>
            <button aria-label="打印预览"><svg class="icon"><use href="#preview"/></svg></button>
            <button aria-label="发布"><svg class="icon"><use href="#publish"/></svg></button>
            <button aria-label="三维 DWF"><svg class="icon"><use href="#globe"/></svg></button>
            <i class="sep"></i>
            <button aria-label="特性匹配"><svg class="icon"><use href="#brush"/></svg></button>
            <button aria-label="块编辑器"><svg class="icon"><use href="#block"/></svg></button>
            <i class="sep"></i>
            <button aria-label="放弃"><svg class="icon"><use href="#undo"/></svg></button>
            <button class="drop" aria-label="放弃列表"><i class="down"></i></button>
            <button aria-label="重做"><svg class="icon"><use href="#redo"/></svg></button>
            <button class="drop off" aria-label="重做列表"><i class="down"></i></button>
            <i class="sep"></i>
            <button aria-label="特性"><svg class="icon"><use href="#props"/></svg></button>
            <button aria-label="设计中心"><svg class="icon"><use href="#dcenter"/></svg></button>
            <button aria-label="工具选项板"><svg class="icon"><use href="#palettes"/></svg></button>
            <button aria-label="图纸集"><svg class="icon"><use href="#sheetset"/></svg></button>
            <button aria-label="标记集"><svg class="icon"><use href="#markup"/></svg></button>
            <button aria-label="计算器"><svg class="icon"><use href="#calc"/></svg></button>
            <i class="sep"></i>
            <button aria-label="帮助"><svg class="icon"><use href="#help"/></svg></button>
        </div>
        <div class="toolbar">
            <i class="grip"></i>
            <button aria-label="图幅"><svg class="icon"><use href="#detail"/></svg></button>
            <button aria-label="标题栏"><svg class="icon"><use href="#title"/></svg></button>
            <button aria-label="序号"><svg class="icon"><use href="#leader"/></svg></button>
            <i class="sep"></i>
            <button aria-label="超级编辑"><svg class="icon"><use href="#wand"/></svg></button>
            <i class="sep"></i>
            <button aria-label="智能标注"><svg class="icon"><use href="#roughness"/></svg></button>
            <button aria-label="粗糙度"><svg class="icon"><use href="#surface"/></svg></button>
            <button aria-label="形位公差"><svg class="icon"><use href="#tol"/></svg></button>
            <i class="sep"></i>
            <button aria-label="轴孔"><svg class="icon"><use href="#shaft"/></svg></button>
            <button aria-label="倒角"><svg class="icon"><use href="#chamfer"/></svg></button>
            <button aria-label="圆角"><svg class="icon"><use href="#corner"/></svg></button>
            <i class="sep"></i>
            <button aria-label="零件库"><svg class="icon"><use href="#windows"/></svg></button>
        </div>
    </div>

    <main class="workspace">
        <div class="main-col">
            <div class="editor">
                <div class="sheet">
                    <div class="canvas">
                        <svg class="drawing" shape-rendering="crispEdges" fill="none" stroke="#fff">
                            <g transform="translate(-2 -76)">
                                <circle cx="336.500" cy="371.500" r="175"/>
                                <circle cx="415.500" cy="371.500" r="105"/>
                                <circle cx="494" cy="372" r="116"/>
                                <circle cx="415.500" cy="371.500" r="126" stroke="#d02424" stroke-dasharray="34 4 7 4"/>
                                <path d="M310.500 371.500H520.500M310.500 371.500 457 276 336.500 371.500 483 276M415.500 371.500 457 276M415.500 371.500 470 259M493.500 371.500 457 276 520.500 371.500M493.500 371.500 431 276"/>
                                <!-- Dimensions -->
                                <g stroke="#34d8e4">
                                    <path d="M310.500 372v29M336.500 372v29M415.500 365v36M493.500 372v29M520.500 372v29M310.500 396.500h210"/>
                                    <path d="M408 371.500h14" stroke="#1c8f8f"/>
                                    <path d="M312 396.500h4M330 396.500h4M340 396.500h4M408 396.500h4M419 396.500h4M486 396.500h4M497 396.500h4M513 396.500h4" stroke-width="3"/>
                                    <path d="M629 224.500h-70.500L504 281"/>
                                    <path d="m503 281 3-5 3 3z" fill="#34d8e4"/>
                                </g>
                                <g class="dim-text">
                                    <text x="316" y="392">10</text>
                                    <text x="368" y="392">30</text>
                                    <text x="447" y="392">30</text>
                                    <text x="499" y="392">10</text>
                                    <text x="561" y="221">R47.958315</text>
                                </g>
                                <path d="M467.500 173.500h6v6h-6z"/>
                                <!-- UCS icon -->
                                <path d="M13.500 603.500h11v11h-11zM19.500 603V557M14.500 556.500h10l-5-14zM19.500 543v13M25 609.500h47M72.500 604.500v9l13-4.500zM73 609.500h11"/>
                                <g class="ucs-text">
                                    <text x="96" y="616">X</text>
                                    <text x="16" y="532">Y</text>
                                </g>
                            </g>
                        </svg>
                        <section class="palette">
                            <div class="palette-title"><h2>系列化分类库</h2><button aria-label="关闭工具栏"><svg viewBox="0 0 12 12"><path d="m2 2 8 8m0-8-8 8" stroke="#000" stroke-width="1.500"/></svg></button></div>
                            <div class="palette-tools">
                                <button aria-label="螺栓"><svg class="icon"><use href="#bolt"/></svg></button>
                                <button aria-label="轴承"><svg class="icon"><use href="#bearing"/></svg></button>
                                <button aria-label="螺母"><svg class="icon"><use href="#nut"/></svg></button>
                                <button aria-label="铆钉"><svg class="icon"><use href="#rivet"/></svg></button>
                                <button aria-label="键"><svg class="icon"><use href="#key"/></svg></button>
                                <button aria-label="弹簧"><svg class="icon"><use href="#spring"/></svg></button>
                                <button aria-label="板件"><svg class="icon"><use href="#plate"/></svg></button>
                                <button aria-label="法兰"><svg class="icon"><use href="#flange"/></svg></button>
                                <button aria-label="电机"><svg class="icon"><use href="#motor"/></svg></button>
                                <button aria-label="型钢"><svg class="icon"><use href="#beam"/></svg></button>
                                <i class="sep"></i>
                                <button aria-label="减速器"><svg class="icon"><use href="#reducer"/></svg></button>
                                <button aria-label="阀门"><svg class="icon"><use href="#valve"/></svg></button>
                                <button aria-label="泵"><svg class="icon"><use href="#pump"/></svg></button>
                                <button aria-label="管件"><svg class="icon"><use href="#fitting"/></svg></button>
                            </div>
                        </section>
                    </div>
                    <div class="layout-tabs">
                        <div class="tab-nav">
                            <button aria-label="第一个"><svg viewBox="0 0 12 12"><path d="M3 2v8" stroke="#aaa69a" stroke-width="2"/><path d="M10 2v8L5 6z" fill="#aaa69a"/></svg></button>
                            <button aria-label="上一个"><svg viewBox="0 0 12 12"><path d="M9 2v8L4 6z" fill="#aaa69a"/></svg></button>
                            <button aria-label="下一个"><svg viewBox="0 0 12 12"><path d="M4 2v8l5-4z" fill="#aaa69a"/></svg></button>
                            <button aria-label="最后一个"><svg viewBox="0 0 12 12"><path d="M9 2v8" stroke="#aaa69a" stroke-width="2"/><path d="M2 2v8l5-4z" fill="#aaa69a"/></svg></button>
                        </div>
                        <button class="tab active">模型</button>
                        <button class="tab">布局1</button>
                        <button class="tab">布局2</button>
                    </div>
                </div>
                <div class="side-tools">
                    <i class="hgrip"></i>
                    <button aria-label="图幅"><svg class="icon"><use href="#detail"/></svg></button>
                    <button aria-label="序号"><svg class="icon"><use href="#leader"/></svg></button>
                    <button aria-label="坐标标注"><svg class="icon"><use href="#axis"/></svg></button>
                    <button aria-label="文字处理"><svg class="icon"><use href="#textwave"/></svg></button>
                    <button class="plain" aria-label="轴孔"><svg class="icon"><use href="#shaft"/></svg></button>
                    <button aria-label="构造"><svg class="icon"><use href="#redbox"/></svg></button>
                    <button aria-label="智能标注"><svg class="icon"><use href="#roughness"/></svg></button>
                    <button aria-label="粗糙度"><svg class="icon"><use href="#surface"/></svg></button>
                    <button aria-label="超级编辑"><svg class="icon"><use href="#wand"/></svg></button>
                    <button aria-label="文字"><svg class="icon"><use href="#textgreen"/></svg></button>
                    <button aria-label="孔轴"><svg class="icon"><use href="#redrect"/></svg></button>
                    <button aria-label="标签"><svg class="icon"><use href="#tag"/></svg></button>
                    <button aria-label="系统"><svg class="icon"><use href="#blueblob"/></svg></button>
                    <button class="plain" aria-label="零件库"><svg class="icon"><use href="#windows"/></svg></button>
                    <button aria-label="密封圈"><svg class="icon"><use href="#ring"/></svg></button>
                    <button aria-label="明细表"><svg class="icon"><use href="#sheet"/></svg></button>
                    <button aria-label="提示"><svg class="icon"><use href="#idea"/></svg></button>
                </div>
            </div>

            <div class="command">
                <i class="grip"></i>
                <div class="command-box">
                    <div class="history">
                        <p>请选择超级编辑实体<span>:</span></p>
                        <div class="vscroll">
                            <button aria-label="向上"><svg viewBox="0 0 14 14"><path d="m3 9 4-4 4 4" fill="none" stroke="#4d6185" stroke-width="2"/></svg></button>
                            <button aria-label="向下"><svg viewBox="0 0 14 14"><path d="m3 5 4 4 4-4" fill="none" stroke="#4d6185" stroke-width="2"/></svg></button>
                        </div>
                    </div>
                    <div class="prompt">
                        <label for="cmd">命令<span>:</span></label>
                        <input id="cmd" type="text">
                        <div class="hscroll">
                            <button aria-label="向左"><svg viewBox="0 0 14 14"><path d="M9 3 5 7l4 4" fill="none" stroke="#4d6185" stroke-width="2"/></svg></button>
                            <i class="thumb"></i>
                            <button aria-label="向右"><svg viewBox="0 0 14 14"><path d="m5 3 4 4-4 4" fill="none" stroke="#4d6185" stroke-width="2"/></svg></button>
                        </div>
                    </div>
                </div>
            </div>
        </div>

        <aside class="dock">
            <div class="dock-head">
                <button aria-label="折叠"><svg viewBox="0 0 10 10"><path d="M1 5h8" stroke="#000" stroke-width="2"/></svg></button>
                <i></i>
                <button aria-label="关闭面板"><svg viewBox="0 0 10 10"><path d="m2 2 6 6m0-6L2 8" stroke="#000" stroke-width="1.500"/></svg></button>
            </div>

            <section class="panel">
                <svg class="badge"><use href="#layers"/></svg>
                <div class="rows">
                    <div class="tools"><button aria-label="图层隔离"><svg class="icon"><use href="#layeriso"/></svg></button><button aria-label="图层特性"><svg class="icon"><use href="#layers"/></svg></button></div>
                    <div class="field"><span class="combo"><select aria-label="图层状态"><option>未保存的图层状态</option></select></span><button aria-label="图层状态管理器"><svg class="icon"><use href="#layerstate"/></svg></button></div>
                    <div class="field">
                        <button aria-label="上一个图层"><svg class="icon"><use href="#layerprev"/></svg></button>
                        <span class="combo wide layer-combo">
                            <span class="layer-flags"><svg class="icon"><use href="#bulb"/></svg><svg class="icon"><use href="#sun"/></svg><svg class="icon"><use href="#freeze"/></svg><svg class="icon"><use href="#unlock"/></svg><i></i></span>
                            <select class="en" aria-label="图层"><option>0</option></select>
                        </span>
                    </div>
                </div>
            </section>

            <section class="panel draw">
                <svg class="badge"><use href="#shapes"/></svg>
                <div class="rows">
                    <div class="tools">
                        <button aria-label="直线"><svg class="icon"><use href="#line"/></svg></button>
                        <button aria-label="构造线"><svg class="icon"><use href="#xline"/></svg></button>
                        <button aria-label="多段线"><svg class="icon"><use href="#pline"/></svg></button>
                        <button aria-label="正多边形"><svg class="icon"><use href="#polygon"/></svg></button>
                        <button aria-label="矩形"><svg class="icon"><use href="#rect"/></svg></button>
                        <button aria-label="圆弧"><svg class="icon"><use href="#arc"/></svg></button>
                        <button aria-label="圆"><svg class="icon"><use href="#circle"/></svg></button>
                        <i class="more"></i>
                    </div>
                    <div class="tools">
                        <button aria-label="删除"><svg class="icon"><use href="#erase"/></svg></button>
                        <button aria-label="复制"><svg class="icon"><use href="#copy"/></svg></button>
                        <button aria-label="镜像"><svg class="icon"><use href="#mirror"/></svg></button>
                        <button aria-label="偏移"><svg class="icon"><use href="#offset"/></svg></button>
                        <button aria-label="阵列"><svg class="icon"><use href="#array"/></svg></button>
                        <button aria-label="移动"><svg class="icon"><use href="#move"/></svg></button>
                        <button aria-label="旋转"><svg class="icon"><use href="#rotate"/></svg></button>
                        <i class="more"></i>
                    </div>
                </div>
            </section>

            <section class="panel short">
                <svg class="badge"><use href="#feather"/></svg>
                <div class="rows">
                    <div class="tools"><button aria-label="添加比例"><svg class="icon"><use href="#plotadd"/></svg></button><button aria-label="删除比例"><svg class="icon"><use href="#plotdel"/></svg></button><button aria-label="比例列表"><svg class="icon"><use href="#plotpage"/></svg></button></div>
                </div>
            </section>

            <section class="panel">
                <svg class="badge"><use href="#dimbig"/></svg>
                <div class="rows">
                    <div class="tools">
                        <button aria-label="快速标注"><svg class="icon"><use href="#dimquick"/></svg></button><i class="bar"></i>
                        <button aria-label="线性标注"><svg class="icon"><use href="#dimlin"/></svg></button>
                        <button aria-label="对齐标注"><svg class="icon"><use href="#dimali"/></svg></button>
                        <button aria-label="弧长标注"><svg class="icon"><use href="#dimarc"/></svg></button>
                        <button aria-label="坐标标注"><svg class="icon"><use href="#dimord"/></svg></button><i class="bar"></i>
                        <button aria-label="半径标注"><svg class="icon"><use href="#dimrad"/></svg></button>
                        <button aria-label="折弯标注"><svg class="icon"><use href="#dimjog"/></svg></button>
                        <i class="more"></i>
                    </div>
                    <div class="field"><span class="combo indent"><select class="en" aria-label="标注样式"><option>TH_GBDIM</option></select></span><button aria-label="标注样式管理"><svg class="icon"><use href="#dimstyle"/></svg></button></div>
                </div>
            </section>

            <section class="panel">
                <svg class="badge" viewBox="0 0 20 20"><path d="M3 18 9 3h2l6 15M6 13h8" fill="none" stroke="#6c8db3" stroke-width="3"/></svg>
                <div class="rows">
                    <div class="tools"><button aria-label="单行文字"><svg class="icon"><use href="#txt"/></svg></button><button aria-label="多行文字"><svg class="icon"><use href="#mtxt"/></svg></button><i class="bar"></i><button aria-label="查找"><svg class="icon"><use href="#find"/></svg></button><button aria-label="拼写检查"><svg class="icon"><use href="#spell"/></svg></button></div>
                    <div class="field"><span class="combo indent"><select class="en" aria-label="文字样式"><option>PC_TEXTSTYLE</option></select></span><button aria-label="文字样式管理"><svg class="icon"><use href="#txtstyle"/></svg></button></div>
                    <div class="field"><span class="combo wide"><select class="en" aria-label="文字高度"><option>5.0000</option></select></span></div>
                </div>
            </section>

            <section class="panel">
                <svg class="badge"><use href="#leaderbig"/></svg>
                <div class="rows">
                    <div class="tools"><button aria-label="多重引线"><svg class="icon"><use href="#ml"/></svg></button><i class="bar"></i><button aria-label="添加引线"><svg class="icon"><use href="#mladd"/></svg></button><button aria-label="删除引线"><svg class="icon"><use href="#mldel"/></svg></button><i class="bar"></i><button aria-label="对齐引线"><svg class="icon"><use href="#mlalign"/></svg></button><button aria-label="合并引线"><svg class="icon"><use href="#mlgroup"/></svg></button></div>
                    <div class="field"><span class="combo indent"><select class="en" aria-label="引线样式"><option>Standard</option></select></span><button aria-label="引线样式管理"><svg class="icon"><use href="#mlstyle"/></svg></button></div>
                </div>
            </section>

            <section class="panel">
                <svg class="badge"><use href="#tabbig"/></svg>
                <div class="rows">
                    <div class="tools"><button aria-label="表格"><svg class="icon"><use href="#table"/></svg></button><i class="bar"></i><button aria-label="更新链接"><svg class="icon"><use href="#tablink"/></svg></button><button aria-label="提取"><svg class="icon"><use href="#tabex"/></svg></button></div>
                    <div class="field"><span class="combo"><select class="en" aria-label="表格样式"><option>Standard</option></select></span><button aria-label="表格样式管理"><svg class="icon"><use href="#tabstyle"/></svg></button></div>
                </div>
            </section>

            <section class="panel">
                <svg class="badge"><use href="#compass"/></svg>
                <div class="rows">
                    <div class="tools"><button aria-label="平移"><svg class="icon"><use href="#pan"/></svg></button><button aria-label="实时缩放"><svg class="icon"><use href="#zoomrt"/></svg></button><i class="bar"></i><button aria-label="窗口缩放"><svg class="icon"><use href="#zoomwin"/></svg></button><button aria-label="范围缩放"><svg class="icon"><use href="#zoomext"/></svg></button></div>
                    <div class="field"><button aria-label="上一视图"><svg class="icon"><use href="#back"/></svg></button><span class="combo wide disabled"><select aria-label="视图" disabled><option></option></select></span></div>
                </div>
            </section>
        </aside>
    </main>

    <footer class="statusbar">
        <output class="coords">1680.6075, 1005.7600, 0.0000</output>
        <div class="toggles">
            <button>捕捉</button>
            <button>栅格</button>
            <button>正交</button>
            <button class="on">极轴</button>
            <button class="on">对象捕捉</button>
            <button class="on">对象追踪</button>
            <button class="on en">DUCS</button>
            <button class="on en">DYN</button>
            <button>线宽</button>
            <button class="on">模型</button>
        </div>
        <div class="scale">注释比例<span>: 1:1</span><i class="down"></i></div>
        <div class="status-icons">
            <button aria-label="注释可见性"><svg class="icon"><use href="#annovis"/></svg></button>
            <button aria-label="自动缩放"><svg class="icon"><use href="#annoauto"/></svg></button>
            <div class="tray-well"><svg class="icon"><use href="#app"/></svg><svg class="icon"><use href="#lock"/></svg></div>
            <i class="down"></i>
            <button class="fullscreen" aria-label="全屏显示"></button>
        </div>
    </footer>

    <div class="taskbar">
        <button class="start"><svg viewBox="0 0 18 18"><use href="#flag"/></svg>开始</button>
        <div class="quick">
            <button aria-label="浏览器"><svg class="icon"><use href="#ie"/></svg></button>
            <button aria-label="桌面"><svg class="icon"><use href="#desktop"/></svg></button>
            <button aria-label="SolidWorks"><svg class="icon"><use href="#sw"/></svg></button>
        </div>
        <button class="task"><svg class="icon"><use href="#ie"/></svg>画个圆<span>-</span>『<span>AutoCAD...</span></button>
        <button class="task current"><svg class="icon"><use href="#app"/></svg>清华天河<span>PCCAD200...</span></button>
        <div class="tray">
            <svg viewBox="0 0 60 16"><path d="M6 2h12v8H6zM28 5h7v7h-7zM32 1h7v6h-7zM44 2h12v9H44z" fill="#7cc4f5" stroke="#2e6da8"/></svg>
            <time>21:20</time>
        </div>
        <div class="watermark">三维网<span>www.3dportal.cn</span></div>
    </div>
</body>
</html>
```

FILE: styles.css
```css
* {
    margin: 0;
    padding: 0;
    box-sizing: border-box;
}

body {
    height: 100vh;
    display: flex;
    flex-direction: column;
    overflow: hidden;
    background: #ece9d8;
    color: #000;
    font: 12px/16px "Noto Sans CJK SC", sans-serif;
}

button, input, select {
    font: inherit;
    color: inherit;
    border: 0;
    background: none;
    border-radius: 0;
}

button {
    display: flex;
    align-items: center;
    justify-content: center;
    flex: none;
    white-space: nowrap;
}

svg {
    display: block;
    flex: none;
}

.sprite {
    display: none;
}

.icon {
    width: 16px;
    height: 16px;
}

.en, .menubar span, .scale span, .task span {
    font-family: "DejaVu Sans Mono", monospace;
    font-size: 10px;
}

.t7, .t8, .abc {
    font: bold 6px "Liberation Sans", sans-serif;
    fill: #16802e;
}

.t8 {
    font-size: 8px;
}

.abc {
    fill: #1d3650;
}

.down {
    width: 0;
    height: 0;
    border: 4px solid transparent;
    border-top-color: #111;
    border-bottom: 0;
}

/* Title bar */
.titlebar {
    position: relative;
    height: 26px;
    flex: none;
    display: flex;
    align-items: center;
    padding: 0 2px;
    background: linear-gradient(#0c5adf, #2a86ff 8%, #0560ee 20%, #0458e6 60%, #0265fb 88%, #0142b5);
    color: #fff;
}

.titlebar h1 {
    margin-left: 4px;
    font-size: 14px;
    font-weight: bold;
    white-space: pre;
    text-shadow: 1px 1px #0a2f86;
}

.titlebar h1 span {
    font-family: "DejaVu Sans Mono", monospace;
    font-size: 13px;
}

.netmeter, .speedball {
    position: absolute;
    top: 1px;
    height: 22px;
    display: flex;
    align-items: center;
    border-radius: 6px;
}

.netmeter {
    left: 462px;
    width: 206px;
    padding-left: 8px;
    background: linear-gradient(#6d9be0, #3f7fdc 50%, #6098e4);
    border: 1px solid #8fb8ee;
}

.rate {
    margin: 0 4px;
    color: #dfc67b;
    font: 10px "DejaVu Sans Mono", monospace;
}

.rate.up {
    margin-left: 10px;
}

.percent {
    flex: 1;
    align-self: stretch;
    margin-left: 8px;
    display: flex;
    align-items: center;
    justify-content: center;
    background: linear-gradient(90deg, #8fc2f2, #5295e6);
    border-radius: 0 5px 5px 0;
    font-size: 11px;
}

.speedball {
    left: 706px;
    width: 94px;
    height: 24px;
    background: linear-gradient(#edf5fd, #bcd8f2);
    color: #111;
    overflow: hidden;
    font: 10px "Liberation Sans", sans-serif;
}

.speedball .bird {
    width: 19px;
    height: 18px;
}

.speedball button {
    width: 21px;
    height: 24px;
    margin-left: auto;
    background: #1e5cb0;
}

.window-buttons {
    display: flex;
    gap: 2px;
    margin-left: auto;
}

.window-buttons button {
    width: 21px;
    height: 21px;
    border: 1px solid #fff;
    border-radius: 3px;
    background: linear-gradient(135deg, #6c9cf5, #2459da 60%, #3b7cf2);
}

.window-buttons .close {
    background: linear-gradient(135deg, #f09a80, #d8431e 60%, #e36340);
}

.window-buttons svg {
    width: 18px;
    height: 18px;
}

/* Menu bar */
.menubar {
    height: 20px;
    flex: none;
    display: flex;
    align-items: center;
    padding-left: 4px;
}

.menubar > button {
    height: 20px;
    padding: 0 6px;
}

.help-search {
    flex: 1;
    min-width: 0;
    height: 18px;
    margin-left: 40px;
    padding: 0 3px;
    background: #fff;
    border-left: 1px solid #7f9db9;
}

.help-search::placeholder {
    color: #9b9b9b;
}

.info-buttons {
    display: flex;
}

.info-buttons button {
    width: 18px;
    height: 17px;
    border: 1px solid #c0bdae;
}

.info-buttons .wide {
    width: 30px;
    gap: 2px;
}

.info-buttons .icon {
    width: 14px;
    height: 14px;
}

.info-buttons .down, .drop .down {
    border-width: 3px 3px 0;
}

.mdi-buttons {
    display: flex;
    width: 60px;
    padding-left: 6px;
}

.mdi-buttons button {
    width: 18px;
}

.mdi-buttons svg {
    width: 11px;
    height: 11px;
}

/* Toolbars */
.toolbars {
    height: 29px;
    flex: none;
    display: flex;
    border-top: 1px solid #fff;
    border-bottom: 2px solid #9d9a8c;
}

.toolbar {
    display: flex;
    align-items: center;
    padding: 2px 3px 0 2px;
    border-right: 1px solid #aca899;
    border-left: 1px solid #fff;
}

.toolbar:last-child {
    flex: 1;
    border-right: 0;
}

.workspace-bar {
    width: 239px;
    padding-left: 1px;
}

.toolbar button, .palette-tools button {
    width: 23px;
    height: 22px;
}

.toolbar .drop {
    width: 12px;
}

.toolbar .off {
    opacity: 0.4;
}

.grip {
    width: 7px;
    height: 24px;
    margin-right: 3px;
    flex: none;
    border: solid #b8b4a3;
    border-width: 0 1px;
    background: linear-gradient(90deg, #fff 2px, #ece9d8 2px, #b8b4a3 3px, #fff 3px, #ece9d8 5px);
}

.sep {
    width: 6px;
    height: 22px;
    flex: none;
    background: linear-gradient(90deg, transparent 2px, #c9c6b8 2px, #c9c6b8 3px, #fff 3px, #fff 4px, transparent 4px);
}

.combo {
    position: relative;
    display: flex;
    width: 150px;
    height: 20px;
    background: #fff;
    border: 1px solid #7f9db9;
}

.combo select {
    appearance: none;
    width: 100%;
    padding-left: 3px;
    outline: 0;
}

.combo::before {
    content: "";
    position: absolute;
    top: 1px;
    right: 1px;
    bottom: 1px;
    width: 15px;
    background: linear-gradient(135deg, #dbe6fe, #b4c9f6);
    border-radius: 2px;
    pointer-events: none;
}

.combo::after {
    content: "";
    position: absolute;
    top: 5px;
    right: 6px;
    width: 5px;
    height: 5px;
    border: solid #4d6185;
    border-width: 0 2px 2px 0;
    transform: rotate(45deg);
    pointer-events: none;
}

.combo.wide {
    width: 172px;
}

.combo.indent select {
    padding-left: 18px;
}

.combo.disabled {
    background: #ece9d8;
    border-color: #c9c7ba;
}

.combo.disabled::before {
    background: #f0eee3;
    border: 1px solid #e0ddce;
}

.combo.disabled::after {
    border-color: #c9c7ba;
}

.workspace-bar .combo {
    width: 174px;
    height: 21px;
}

.workspace-bar select {
    padding-left: 8px;
}

/* Work area */
.workspace {
    flex: 1;
    min-height: 0;
    display: flex;
}

.main-col {
    flex: 1;
    min-width: 0;
    display: flex;
    flex-direction: column;
}

.editor {
    flex: 1;
    min-height: 0;
    display: flex;
}

.sheet {
    flex: 1;
    min-width: 0;
    display: flex;
    flex-direction: column;
    border-left: 2px solid #9d9a8c;
    border-top: 1px solid #55534a;
}

.canvas {
    position: relative;
    flex: 1;
    min-height: 0;
    background: #000;
}

.drawing {
    width: 100%;
    height: 100%;
}

.dim-text {
    font: 12px "Liberation Sans", sans-serif;
    fill: #3fd03f;
    stroke: none;
}

.ucs-text {
    font: 300 17px Lato, "Liberation Sans", sans-serif;
    fill: #fff;
    stroke: none;
}

/* Floating parts palette */
.palette {
    position: absolute;
    left: 7px;
    top: 2px;
    width: 338px;
    padding: 3px 4px 2px;
    background: #ece9d8;
    border: 1px solid #d8d4c4;
}

.palette-title {
    height: 17px;
    display: flex;
    justify-content: space-between;
    background: #0054e3;
    color: #fff;
}

.palette-title h2 {
    padding-left: 1px;
    font-size: 13px;
    line-height: 13px;
}

.palette-title button {
    width: 15px;
    height: 14px;
    margin: 1px 1px 0 0;
    background: #ece9d8;
    border: 1px solid;
    border-color: #fff #555 #555 #fff;
}

.palette-title svg {
    width: 11px;
    height: 11px;
}

.palette-tools {
    display: flex;
    padding: 3px 0;
}

/* Layout tabs */
.layout-tabs {
    height: 21px;
    flex: none;
    display: flex;
    align-items: flex-start;
    border-bottom: 2px solid #fff;
}

.tab-nav {
    display: flex;
}

.tab-nav button {
    width: 14px;
    height: 15px;
    border-right: 1px solid #aca899;
    border-bottom: 1px solid #aca899;
}

.tab-nav svg {
    width: 12px;
    height: 12px;
}

.tab {
    position: relative;
    z-index: 0;
    width: 46px;
    height: 15px;
    line-height: 14px;
    border-bottom: 1px solid #aca899;
}

.tab::after {
    content: "";
    position: absolute;
    right: 0;
    top: 0;
    width: 1px;
    height: 14px;
    background: #333;
    transform: skewX(-24deg);
}

.tab.active {
    width: 43px;
    color: #fff;
    border-color: #000;
}

.tab.active::before {
    content: "";
    position: absolute;
    z-index: -1;
    inset: 0 -3px 0 0;
    background: #000;
    clip-path: polygon(0 0, 100% 0, 88% 100%, 12% 100%);
}

/* Vertical toolbar */
.side-tools {
    width: 27px;
    align-self: flex-start;
    display: flex;
    flex-direction: column;
    align-items: center;
    margin: 0 5px 0 1px;
    padding-bottom: 3px;
    border: 1px solid #aca899;
    border-left-color: #fff;
    border-top: 0;
}

.hgrip {
    width: 20px;
    height: 6px;
    margin: 2px 0;
    border: solid #b8b4a3;
    border-width: 1px 0;
}

.side-tools button {
    position: relative;
    width: 22px;
    height: 22px;
}

.side-tools button::after {
    content: "";
    position: absolute;
    right: 3px;
    bottom: 3px;
    border: 2px solid #000;
    border-top-color: transparent;
    border-left-color: transparent;
}

.side-tools .plain::after {
    display: none;
}

/* Command window */
.command {
    height: 66px;
    flex: none;
    display: flex;
    margin-right: 5px;
    padding: 9px 7px 3px 6px;
    border-top: 1px solid #000;
    border-bottom: 1px solid #aca899;
}

.command .grip {
    height: 50px;
    margin-right: 4px;
}

.command-box {
    flex: 1;
    min-width: 0;
    border-top: 1px solid #000;
    border-left: 1px solid #000;
    font-size: 16px;
}

.command-box p span, .command-box label span {
    font: 13px "DejaVu Sans Mono", monospace;
}

.history {
    height: 32px;
    display: flex;
    justify-content: space-between;
    background: #fff;
    border-bottom: 1px solid #9d9a8c;
    padding-left: 1px;
}

.history p {
    line-height: 16px;
}

.vscroll button, .hscroll button {
    width: 15px;
    height: 15px;
    background: #c5d5fb;
    border: 1px solid #a6b9e6;
    border-radius: 2px;
}

.vscroll svg, .hscroll svg {
    width: 13px;
    height: 13px;
}

.prompt {
    height: 20px;
    display: flex;
    align-items: center;
    margin-right: 17px;
    padding-left: 1px;
    background: #fff;
}

.prompt input {
    flex: 1;
    min-width: 0;
    height: 18px;
    outline: 0;
}

.hscroll {
    display: flex;
    width: 66px;
    padding-left: 1px;
    gap: 1px;
}

.hscroll button:last-child {
    margin-left: auto;
}

.thumb {
    width: 16px;
    border: 1px solid #a6b9e6;
    border-radius: 2px;
    background: repeating-linear-gradient(90deg, #c5d5fb 0 2px, #eef3ff 2px 3px);
}

/* Dashboard */
.dock {
    width: 234px;
    flex: none;
    padding-right: 1px;
    background: #eeede8;
    border-left: 1px solid #000;
}

.dock-head {
    height: 20px;
    display: flex;
    align-items: center;
    gap: 4px;
    padding: 0 6px 0 9px;
}

.dock-head button {
    width: 10px;
    height: 10px;
    border: 1px solid;
    border-color: #fff #333 #333 #fff;
}

.dock-head svg {
    width: 9px;
    height: 9px;
}

.dock-head i {
    flex: 1;
    height: 5px;
    border: solid #c2bfb2;
    border-width: 1px 0;
}

.panel {
    position: relative;
    height: 57px;
    margin-left: 2px;
    padding-left: 22px;
    border: solid #aaa8a0;
    border-width: 1px 1px 0;
    background: linear-gradient(90deg, #dcdad3 22px, #eeede8 22px);
}

.panel:has(.field + .field) {
    height: 82px;
}

.panel.short {
    height: 32px;
}

.panel:last-child {
    border-bottom-width: 1px;
}

.badge {
    position: absolute;
    left: 5px;
    top: 5px;
    width: 21px;
    height: 20px;
}

.rows {
    display: flex;
    flex-direction: column;
    align-items: flex-end;
    padding: 1px 3px 0 0;
}

.tools {
    display: flex;
    align-items: center;
    height: 26px;
}

.tools + .field {
    margin-top: 2px;
}

.field + .field {
    margin-top: 5px;
}

.field {
    display: flex;
    align-items: center;
}

.tools button, .field button {
    width: 22px;
    height: 20px;
}

.tools .bar {
    width: 3px;
    height: 20px;
    background: linear-gradient(90deg, transparent 1px, #77756c 1px, #77756c 2px, transparent 2px);
}

.more {
    position: relative;
    width: 7px;
    height: 7px;
    align-self: flex-end;
    border-top: 1px solid #000;
}

.more::after {
    content: "";
    position: absolute;
    top: 2px;
    border: 3px solid transparent;
    border-top-color: #000;
    border-bottom: 0;
}

.layer-flags {
    position: absolute;
    left: 2px;
    top: 1px;
    display: flex;
    gap: 1px;
    align-items: center;
}

.layer-flags i {
    width: 11px;
    height: 11px;
    border: 1px solid #000;
}

.combo.layer-combo select {
    padding-left: 84px;
}

/* Status bar */
.statusbar {
    height: 22px;
    flex: none;
    display: flex;
    align-items: center;
    padding: 2px 4px 1px 5px;
    border-top: 1px solid #fff;
}

.coords {
    width: 186px;
    height: 18px;
    padding-left: 1px;
    border: 1px solid;
    border-color: #aca899 #fff #fff #aca899;
    font: 10px/16px "DejaVu Sans Mono", monospace;
}

.toggles {
    display: flex;
    gap: 4px;
    margin-left: 4px;
}

.toggles button {
    height: 18px;
    padding: 0 1px;
    border: 1px solid;
    border-color: #fff #aca899 #aca899 #fff;
}

.toggles .on {
    border-color: #222 #fff #fff #222;
}

.scale {
    display: flex;
    align-items: center;
    margin-left: auto;
    white-space: pre;
}

.scale .down {
    margin: 0 7px 0 5px;
}

.status-icons {
    display: flex;
    align-items: center;
}

.status-icons button {
    width: 25px;
}

.tray-well {
    display: flex;
    gap: 4px;
    height: 18px;
    padding: 0 3px;
    margin-right: 5px;
    background: #f8f7f2;
    border: 1px solid #c8c5b7;
}

.status-icons .fullscreen {
    width: 16px;
    height: 15px;
    margin-left: 8px;
    background: #c2dcf2;
    border: 1px solid #24568a;
    box-shadow: inset 0 0 0 1px #fff;
}

/* Task bar */
.taskbar {
    position: relative;
    height: 30px;
    flex: none;
    display: flex;
    align-items: center;
    background: linear-gradient(#2a62dc, #3f86f4 8%, #245edb 20%, #245edb 85%, #1941a5);
    color: #fff;
}

.start {
    width: 97px;
    height: 30px;
    gap: 6px;
    padding-right: 10px;
    background: linear-gradient(#2f7a2f, #62b862 10%, #3c963c 25%, #3a923a 80%, #256a25);
    border-radius: 0 9px 9px 0;
    font-size: 18px;
    font-style: italic;
    text-shadow: 1px 1px 1px #143d14;
}

.start svg {
    width: 18px;
    height: 18px;
}

.quick {
    display: flex;
    gap: 7px;
    width: 94px;
    padding-left: 12px;
}

.task {
    width: 159px;
    height: 24px;
    margin-right: 1px;
    gap: 0;
    justify-content: flex-start;
    padding-left: 10px;
    background: linear-gradient(#62a0fb, #3c81f3 20%, #3a7cf0);
    border-radius: 2px;
}

.task .icon {
    margin-right: 3px;
}

.task.current {
    background: #1c4eb5;
    box-shadow: inset 1px 1px 1px #12347c;
}

.tray {
    width: 112px;
    height: 30px;
    margin-left: auto;
    display: flex;
    align-items: center;
    justify-content: space-between;
    padding: 0 14px 0 6px;
    background: linear-gradient(#1290e8, #1aaaf4 15%, #1192ea 80%, #0c72c0);
    border-left: 1px solid #0d4d9c;
}

.tray svg {
    width: 60px;
    height: 16px;
}

.tray time {
    font: 10px "DejaVu Sans Mono", monospace;
}

.watermark {
    position: absolute;
    right: 18px;
    bottom: 4px;
    font-size: 18px;
    font-weight: bold;
    line-height: 20px;
    color: #fff;
    text-shadow: 1px 0 #e33030, -1px 0 #e33030, 0 1px #e33030, 0 -1px #e33030, 1px 1px #e33030, -1px -1px #e33030;
}

.watermark span {
    font: bold 15px "DejaVu Sans", sans-serif;
}
```
